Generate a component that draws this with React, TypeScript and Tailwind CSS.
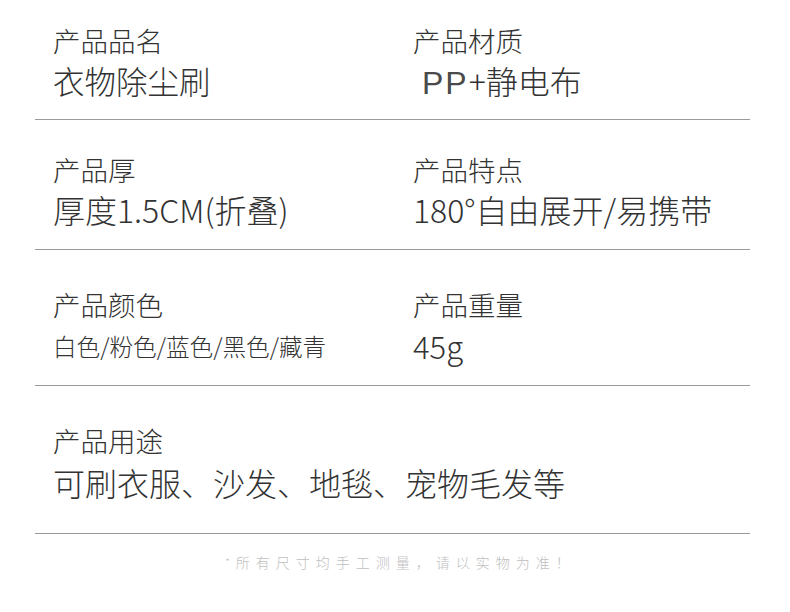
import React from "react";

const cjk = { fontFamily: '"Noto Sans CJK SC", "Noto Sans", sans-serif' };

function Cell({ label, children }: { label: string; children: React.ReactNode }) {
  return (
    <div className="flex flex-col">
      <div className="text-[27.5px] leading-[40px] text-[#333333] font-light">{label}</div>
      {children}
    </div>
  );
}

export default function App() {
  return (
    <div className="w-[790px] h-[612px] bg-white overflow-hidden" style={cjk}>
      <div className="ml-[35px] w-[715px]">
        {/* Row 1 */}
        <div className="h-[120px] border-b border-[#9a9a9a] pl-[18px] pt-[20px] grid grid-cols-[360px_1fr]">
          <Cell label="产品品名">
            <div className="text-[31.5px] leading-[40px] text-[#333333] font-light">衣物除尘刷</div>
          </Cell>
          <Cell label="产品材质">
            <div className="text-[32px] leading-[40px] text-[#333333] font-light pl-[9px]">
              <span className="text-[32px] tracking-[2px] text-[#4a4a4a] font-normal" style={{ fontFamily: '"Liberation Sans", Arial, sans-serif' }}>PP</span>
              +静电布
            </div>
          </Cell>
        </div>
        {/* Row 2 */}
        <div className="h-[130px] border-b border-[#9a9a9a] pl-[18px] pt-[29px] grid grid-cols-[360px_1fr]">
          <Cell label="产品厚">
            <div className="text-[32px] leading-[40px] text-[#333333] font-light">厚度1.5CM(折叠)</div>
          </Cell>
          <Cell label="产品特点">
            <div className="text-[32px] leading-[40px] text-[#333333] font-light">180°自由展开/易携带</div>
          </Cell>
        </div>
        {/* Row 3 */}
        <div className="h-[136px] border-b border-[#9a9a9a] pl-[18px] pt-[34px] grid grid-cols-[360px_1fr]">
          <Cell label="产品颜色">
            <div className="text-[23.6px] leading-[44px] text-[#333333] font-light">白色/粉色/蓝色/黑色/藏青</div>
          </Cell>
          <Cell label="产品重量">
            <div className="text-[31px] leading-[44px] text-[#333333] font-light">45g</div>
          </Cell>
        </div>
        {/* Row 4 */}
        <div className="h-[148px] border-b border-[#9a9a9a] pl-[18px] pt-[34px]">
          <Cell label="产品用途">
            <div className="text-[32px] leading-[44px] text-[#333333] font-light">可刷衣服、沙发、地毯、宠物毛发等</div>
          </Cell>
        </div>
        {/* Footer */}
        <div className="pt-[18px] pl-[16px] text-center text-[14px] leading-[20px] tracking-[6px] text-[#c0c0c0] font-light">
          <span className="text-[10px] align-top">*</span>所有尺寸均手工测量，请以实物为准！
        </div>
      </div>
    </div>
  );
}
